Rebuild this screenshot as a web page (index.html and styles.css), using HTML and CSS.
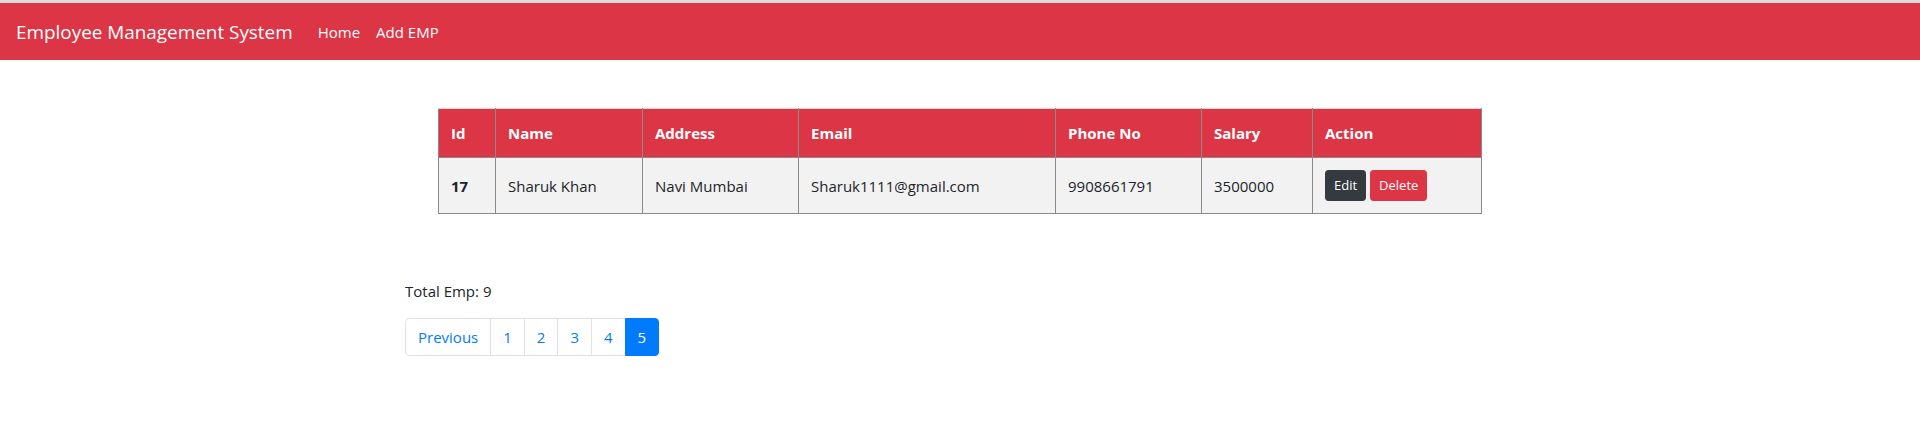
FILE: index.html
```html
<!DOCTYPE html>
<html>
<head>
<meta charset="utf-8">
<link rel="stylesheet" href="styles.css">
</head>
<body>
<div class="topstrip"></div>
<nav class="navbar">
  <a class="brand">Employee Management System</a>
  <a class="nav-link">Home</a>
  <a class="nav-link">Add EMP</a>
</nav>
<div class="container">
  <table class="emp-table">
    <colgroup>
      <col class="c-id"><col class="c-name"><col class="c-addr"><col class="c-email"><col class="c-phone"><col class="c-salary"><col class="c-action">
    </colgroup>
    <thead>
      <tr><th>Id</th><th>Name</th><th>Address</th><th>Email</th><th>Phone No</th><th>Salary</th><th>Action</th></tr>
    </thead>
    <tbody>
      <tr>
        <td class="id">17</td>
        <td>Sharuk Khan</td>
        <td>Navi Mumbai</td>
        <td>Sharuk1111@gmail.com</td>
        <td>9908661791</td>
        <td>3500000</td>
        <td class="actions"><button class="btn btn-dark">Edit</button><button class="btn btn-danger">Delete</button></td>
      </tr>
    </tbody>
  </table>
  <p class="total">Total Emp: 9</p>
  <ul class="pagination">
    <li class="page first">Previous</li>
    <li class="page">1</li>
    <li class="page">2</li>
    <li class="page">3</li>
    <li class="page">4</li>
    <li class="page active">5</li>
  </ul>
</div>
</body>
</html>
```
FILE: styles.css
```css
* { box-sizing: border-box; }
body {
  margin: 0;
  font-family: "Open Sans", "Noto Sans", sans-serif;
  font-size: 15px;
  line-height: 24px;
  color: #212529;
  background: #fff;
}
.topstrip { height: 3px; background: #dadada; }
.navbar {
  height: 57px;
  background: #dc3545;
  display: flex;
  align-items: center;
  padding: 0 16px;
}
.brand {
  font-size: 18.9px;
  line-height: 30px;
  color: #fff;
  margin-right: 17px;
}
.nav-link {
  color: #fff;
  font-size: 15px;
  padding: 0 8px;
}
.container {
  width: 1110px;
  margin: 0 auto;
}
.emp-table {
  border-collapse: collapse;
  table-layout: fixed;
  width: 1043px;
  margin: 48px 0 0 33px;
}
.c-id { width: 57px; }
.c-name { width: 147px; }
.c-addr { width: 156px; }
.c-email { width: 257px; }
.c-phone { width: 146px; }
.c-salary { width: 111px; }
.c-action { width: 169px; }
.emp-table th {
  background: #dc3545;
  color: #fff;
  font-weight: 700;
  text-align: left;
  padding: 12px;
  border: 1px solid #8a8a8a;
  border-top-color: #d6d6d6;
  line-height: 24px;
}
.emp-table td {
  background: #f2f2f2;
  padding: 12px;
  border: 1px solid #8a8a8a;
  vertical-align: middle;
  line-height: 24px;
}
.emp-table td.id { font-weight: 700; }
.btn {
  font-family: inherit;
  font-size: 13px;
  line-height: 21px;
  padding: 4px 8px;
  border: 1px solid transparent;
  border-radius: 3.2px;
  color: #fff;
  height: 31px;
  vertical-align: middle;
}
.btn + .btn { margin-left: 4px; }
.btn-dark { background: #343a40; border-color: #343a40; }
.btn-danger { background: #dc3545; border-color: #dc3545; }
.total {
  margin: 65px 0 15px 0;
}
.pagination {
  display: flex;
  list-style: none;
  margin: 0;
  padding: 0;
}
.page {
  padding: 7px 12px;
  line-height: 22px;
  border: 1px solid #dee2e6;
  color: #007bff;
  margin-left: -1px;
  background: #fff;
}
.page.first { margin-left: 0; border-radius: 4px 0 0 4px; }
.page.active {
  background: #007bff;
  border-color: #007bff;
  color: #fff;
  border-radius: 0 4px 4px 0;
  position: relative;
}
```
